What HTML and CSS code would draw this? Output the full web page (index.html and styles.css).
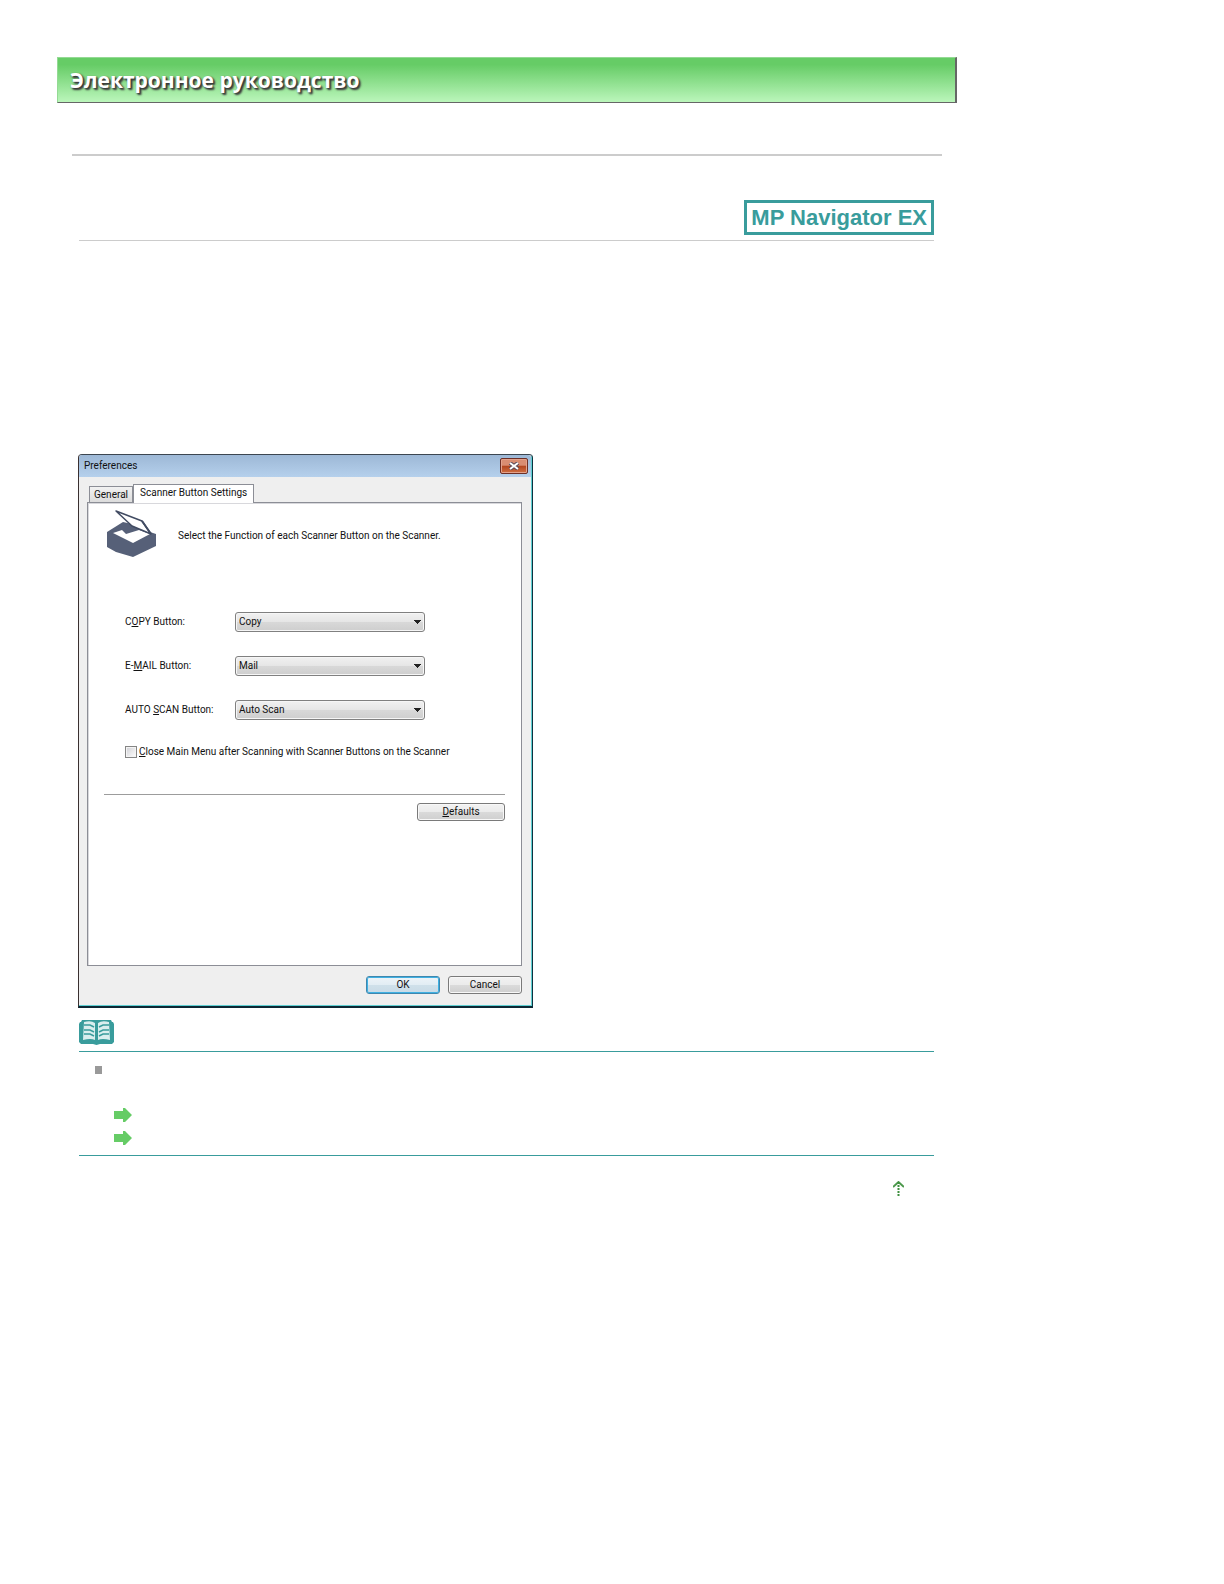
FILE: index.html
```html
<!DOCTYPE html>
<html lang="ru">
<head>
<meta charset="utf-8">
<meta name="viewport" content="width=device-width, initial-scale=1">
<title>Электронное руководство</title>
<link rel="stylesheet" href="styles.css">
</head>
<body>
<div class="page">
  <header class="banner"><h1 class="banner-title">Электронное руководство</h1></header>
  <hr class="rule">
  <main class="content">
    <div class="topic-head"><span class="badge">MP Navigator EX</span></div>

    <section class="dialog" aria-label="Preferences">
      <div class="titlebar">
        <h2 class="dialog-title">Preferences</h2>
        <button class="close" type="button" aria-label="Close">
          <svg width="12" height="8" viewBox="0 0 12 8"><path d="M2 1l8 6M10 1L2 7" stroke="#5a4a58" stroke-width="4"/><path d="M2 1l8 6M10 1L2 7" stroke="#fff" stroke-width="2"/></svg>
        </button>
      </div>
      <div class="tabs" role="tablist">
        <button class="tab" type="button" role="tab" aria-selected="false">General</button>
        <button class="tab tab-active" type="button" role="tab" aria-selected="true">Scanner Button Settings</button>
      </div>
      <form class="panel">
        <div class="intro">
          <svg class="scanner" width="52" height="48" viewBox="0 0 52 48">
            <path d="M1 22L17 12 26 14 44 22 50 24V36L27 47 10 42 1 37Z" fill="#566078"/>
            <path d="M7 23L16 20 20 24 33 20 44 24 27 33Z" fill="#fff"/>
            <path d="M10 1L36 11 45 24 26 16Z" fill="#fff" stroke="#414b62" stroke-width="1.500" stroke-linejoin="round"/>
            <path d="M36 11L45 24" stroke="#414b62" stroke-width="2"/>
          </svg>
          <p class="intro-text">Select the Function of each Scanner Button on the Scanner.</p>
        </div>
        <div class="fields">
          <label class="label" for="copy">C<u>O</u>PY Button:</label>
          <select class="select" id="copy"><option>Copy</option></select>
          <label class="label" for="mail">E-<u>M</u>AIL Button:</label>
          <select class="select" id="mail"><option>Mail</option></select>
          <label class="label" for="auto">AUTO <u>S</u>CAN Button:</label>
          <select class="select" id="auto"><option>Auto Scan</option></select>
        </div>
        <div class="check-row">
          <input class="check" type="checkbox" id="closemenu">
          <label for="closemenu"><u>C</u>lose Main Menu after Scanning with Scanner Buttons on the Scanner</label>
        </div>
        <div class="defaults"><button class="btn btn-wide" type="button"><u>D</u>efaults</button></div>
      </form>
      <div class="actions">
        <button class="btn btn-primary" type="button">OK</button>
        <button class="btn" type="button">Cancel</button>
      </div>
    </section>

    <section class="note" aria-label="Note">
      <svg class="book" width="35" height="25" viewBox="0 0 35 25">
        <path d="M3 0H32L33 2H34L35 4V22L33 24H21L17.500 25 14 24H2L0 22V4L1 2H2Z" fill="#399c9c"/>
        <path d="M5 2Q12 0 16 3V20Q12 18 4 20Z" fill="#d9eeee"/>
        <path d="M30 2Q23 0 19 3V20Q23 18 31 20Z" fill="#d9eeee"/>
        <path d="M5 5H11L15 7M5 10H11L15 12M5 14H11L15 16M30 5H24L20 7M30 10H24L20 12M30 14H24L20 16" fill="none" stroke="#399c9c" stroke-width="1.500"/>
      </svg>
      <div class="note-body">
        <div class="bullet"></div>
        <ul class="links">
          <li><svg width="18" height="14" viewBox="0 0 18 14"><path d="M0 3H9V0H11L18 7 11 14H9V11H0Z" fill="#66cc66"/></svg></li>
          <li><svg width="18" height="14" viewBox="0 0 18 14"><path d="M0 3H9V0H11L18 7 11 14H9V11H0Z" fill="#66cc66"/></svg></li>
        </ul>
      </div>
    </section>
    <div class="to-top">
      <a href="#" aria-label="Наверх"><svg width="11" height="15" viewBox="0 0 11 15"><path d="M0 6L5.500 1 11 6" fill="none" stroke="#4d994d" stroke-width="2"/><path d="M5.500 1V15" stroke="#3f8f3f" stroke-width="2" stroke-dasharray="2 1"/></svg></a>
    </div>
  </main>
</div>
</body>
</html>
```
FILE: styles.css
```css
* { box-sizing: border-box; }
body { margin: 0; background: #fff; color: #111; font: 10px/14px Roboto, "Liberation Sans", Arial, sans-serif; }
h1, h2, p, ul { margin: 0; padding: 0; }
svg { display: block; }
button, select, input { font: inherit; color: inherit; margin: 0; }

.page { max-width: 900px; margin: 57px; }
.banner {
  display: flex; align-items: center; height: 46px; padding: 0 12px;
  border: solid; border-width: 1px 2px 1px 1px; border-color: #94da94 #666 #666 #94da94;
  background: linear-gradient(#66cc66, #66cc66 15%, #bbf6bb);
}
.banner-title {
  font: bold 21px/30px "Open Sans", "Noto Sans", sans-serif; color: #fff;
  text-shadow: 1px 1px 2px #333, 2px 2px 2px #444;
}
.rule { height: 2px; margin: 51px 15px 0; border: 0; background: #ccc; }
.content { padding: 44px 23px 0 22px; }

.topic-head { display: flex; justify-content: flex-end; padding-bottom: 5px; border-bottom: 1px solid #ccc; }
.badge {
  padding: 0 4px; border: 3px solid #399c9c; color: #399c9c;
  font: bold 22px/29px "Liberation Sans", Arial, sans-serif;
}

.dialog {
  max-width: 455px; margin: 213px 0 0 -1px; padding: 0 10px 12px 8px;
  border: solid; border-width: 1px 1px 2px 1px; border-color: #3c4650 #0c3340 #0c2834 #3a3030;
  border-radius: 4px 4px 0 0; background: #efefef; box-shadow: inset -1px -1px #5ecfd2;
}
.titlebar {
  display: flex; align-items: center; justify-content: space-between;
  height: 22px; margin: 0 -9px 0 -8px; padding: 0 3px 0 5px;
  background: linear-gradient(#9db8d6, #b5d0ec); border-radius: 3px 3px 0 0;
}
.dialog-title { font-size: 10px; font-weight: normal; }
.close {
  display: flex; align-items: center; justify-content: center; width: 28px; height: 16px; padding: 0;
  border: 1px solid #6d2f26; border-radius: 2px; box-shadow: inset 0 0 0 1px #e3a28c;
  background: linear-gradient(#d98d72 45%, #b2451f 50%, #cf7044);
}
.tabs { display: flex; align-items: flex-end; padding: 7px 0 0 2px; }
.tab {
  height: 16px; padding: 0 4px; border: 1px solid #8c8e96; border-bottom: 0;
  background: linear-gradient(#f2f2f2, #dcdcdc); line-height: 14px; white-space: nowrap;
}
.tab-active { position: relative; height: 19px; margin-bottom: -1px; padding: 0 6px 2px; background: #fff; }
.panel {
  min-height: 464px; padding: 7px 16px 0; background: #fff;
  border: 1px solid #8c8e96; box-shadow: inset 1px 1px #d8d8dc;
}
.intro { display: flex; align-items: center; gap: 20px; padding-left: 2px; }
.intro-text { padding-top: 4px; }
.fields {
  display: grid; grid-template-columns: 110px 190px; row-gap: 24px; align-items: center;
  padding: 54px 0 0 21px;
}
.select {
  appearance: none; width: 100%; height: 20px; padding: 0 20px 0 3px;
  border: 1px solid #808080; border-radius: 3px; box-shadow: inset 0 0 0 1px #f6f6f6;
  background:
    linear-gradient(#222, #222) right 3px top 7px / 7px 1px no-repeat,
    linear-gradient(#222, #222) right 4px top 8px / 5px 1px no-repeat,
    linear-gradient(#222, #222) right 5px top 9px / 3px 1px no-repeat,
    linear-gradient(#222, #222) right 6px top 10px / 1px 1px no-repeat,
    linear-gradient(#f1f1f1, #e6e6e6 48%, #d8d8d8 52%, #cecece);
}
.check-row { display: flex; align-items: center; gap: 2px; padding: 25px 0 35px 21px; white-space: nowrap; }
.check {
  appearance: none; width: 12px; height: 12px; border: 1px solid #858585;
  background: linear-gradient(135deg, #cfcfd4, #fff); box-shadow: inset 0 0 0 1px #f4f4f4;
}
.defaults { display: flex; justify-content: flex-end; padding-top: 8px; border-top: 1px solid #9c9c9c; }
.btn {
  width: 74px; height: 18px; padding: 0; line-height: 14px;
  border: 1px solid #7a7a7a; border-radius: 3px; box-shadow: inset 0 0 0 1px #f8f8f8;
  background: linear-gradient(#f2f2f2, #ebebeb 48%, #dadada 52%, #cfcfcf);
}
.btn-wide { width: 88px; }
.btn-primary {
  border-color: #3f87ae; box-shadow: inset 0 0 0 1px #3fb0e2;
  background: linear-gradient(#eef4f8, #e2edf4 48%, #cfe0ea 52%, #c9dbe6);
}
.actions { display: flex; justify-content: flex-end; gap: 8px; padding-top: 10px; }

.note { margin-top: 12px; border-bottom: 1px solid #399c9c; }
.note-body { margin-top: 6px; padding: 14px 16px 10px; border-top: 1px solid #399c9c; }
.bullet { width: 7px; height: 8px; background: #999; }
.links { display: grid; gap: 9px; padding: 34px 0 0 19px; list-style: none; }
.to-top { display: flex; justify-content: flex-end; padding: 25px 30px 0; }
```
